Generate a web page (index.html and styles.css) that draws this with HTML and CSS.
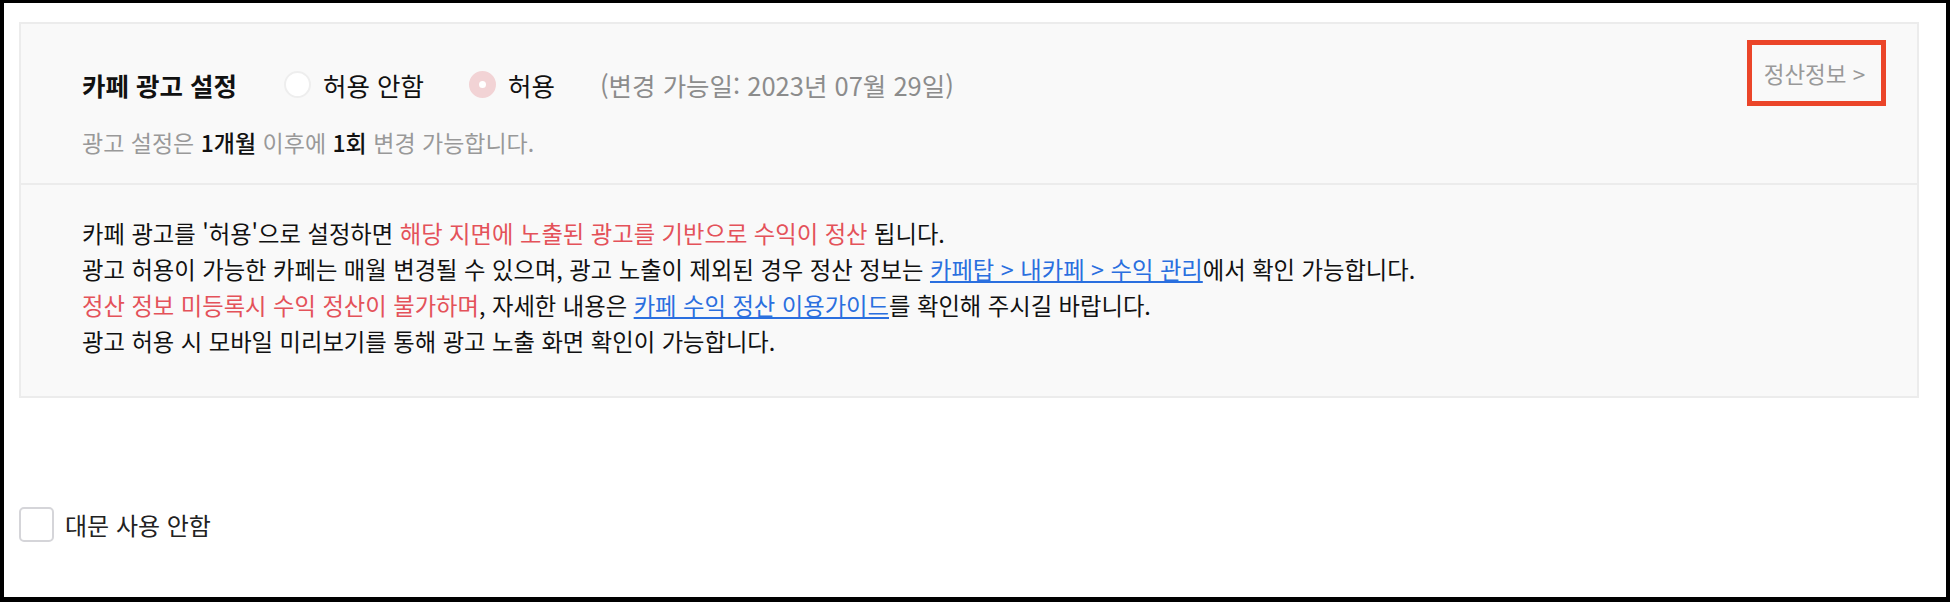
FILE: index.html
```html
<!DOCTYPE html>
<html lang="ko">
<head>
    <meta charset="UTF-8">
    <meta name="viewport" content="width=device-width, initial-scale=1.0">
    <title>카페 광고 설정</title>
    <link rel="stylesheet" href="styles.css">
</head>
<body>
    <div class="page">
        <div class="ad-box">
            <div class="ad-header">
                <div class="ad-setting">
                    <div class="setting-row">
                        <h2 class="setting-title">카페 광고 설정</h2>
                        <label class="radio-item">
                            <span class="radio"></span>
                            <span>허용 안함</span>
                        </label>
                        <label class="radio-item">
                            <span class="radio checked"></span>
                            <span>허용</span>
                        </label>
                        <span class="change-date">(변경 가능일: 2023년 07월 29일)</span>
                    </div>
                    <p class="setting-note">광고 설정은 <b>1개월</b> 이후에 <b>1회</b> 변경 가능합니다.</p>
                </div>
                <a href="#" class="settle-link">정산정보 &gt;</a>
            </div>
            <div class="ad-desc">
                <p>카페 광고를 '허용'으로 설정하면 <span class="red">해당 지면에 노출된 광고를 기반으로 수익이 정산</span> 됩니다.</p>
                <p>광고 허용이 가능한 카페는 매월 변경될 수 있으며, 광고 노출이 제외된 경우 정산 정보는 <a href="#">카페탑 &gt; 내카페 &gt; 수익 관리</a>에서 확인 가능합니다.</p>
                <p><span class="red">정산 정보 미등록시 수익 정산이 불가하며</span>, 자세한 내용은 <a href="#">카페 수익 정산 이용가이드</a>를 확인해 주시길 바랍니다.</p>
                <p>광고 허용 시 모바일 미리보기를 통해 광고 노출 화면 확인이 가능합니다.</p>
            </div>
        </div>
        <label class="check-item">
            <span class="checkbox"></span>
            <span>대문 사용 안함</span>
        </label>
    </div>
</body>
</html>
```

FILE: styles.css
```css
html, body {
    height: 100%;
}
body {
    margin: 0;
    background-color: #000;
    font-family: "Noto Sans CJK KR", "Noto Sans", sans-serif;
    color: #111;
}
.page {
    box-sizing: border-box;
    height: calc(100% - 8px);
    margin: 3px 4px 5px 4px;
    padding: 19px 27px 0 15px;
    background-color: #fff;
}
.ad-box {
    border: 2px solid #ececec;
    background-color: #f9f9f9;
}
.ad-header {
    display: flex;
    justify-content: space-between;
    align-items: flex-start;
    padding: 16px 31px 26px 61px;
    border-bottom: 2px solid #ececec;
}
.ad-setting {
    margin-top: 27px;
}
.setting-row {
    display: flex;
    align-items: center;
    height: 34px;
    font-size: 25.5px;
}
.setting-title {
    margin: 0 47px 0 0;
    font-size: 25.5px;
    font-weight: bold;
}
.radio-item {
    display: flex;
    align-items: center;
    gap: 12px;
    margin-right: 45px;
}
.radio {
    box-sizing: border-box;
    width: 27px;
    height: 27px;
    border: 2px solid #eee;
    border-radius: 50%;
    background-color: #fff;
}
.radio.checked {
    border: 10px solid #f2d3d5;
}
.change-date {
    color: #8c8c8c;
}
.setting-note {
    margin: 26px 0 0 0;
    font-size: 23px;
    line-height: 30px;
    color: #999;
}
.setting-note b {
    color: #111;
    font-weight: 500;
}
.settle-link {
    box-sizing: border-box;
    width: 139px;
    height: 66px;
    display: flex;
    align-items: center;
    justify-content: center;
    padding-right: 4px;
    border: 5px solid #eb4529;
    font-size: 22.5px;
    color: #999;
    text-decoration: none;
}
.ad-desc {
    padding: 30px 61px 37px 61px;
    font-size: 23.3px;
    line-height: 36px;
}
.ad-desc p {
    margin: 0;
}
.ad-desc .red {
    color: #e4525a;
}
.ad-desc a {
    color: #2a6fdf;
    text-decoration: underline;
}
.check-item {
    display: flex;
    align-items: center;
    gap: 11px;
    margin-top: 109px;
    font-size: 24px;
    color: #222;
}
.checkbox {
    box-sizing: border-box;
    width: 35px;
    height: 35px;
    border: 2px solid #d5d5d9;
    border-radius: 5px;
    background-color: #fff;
}
```
